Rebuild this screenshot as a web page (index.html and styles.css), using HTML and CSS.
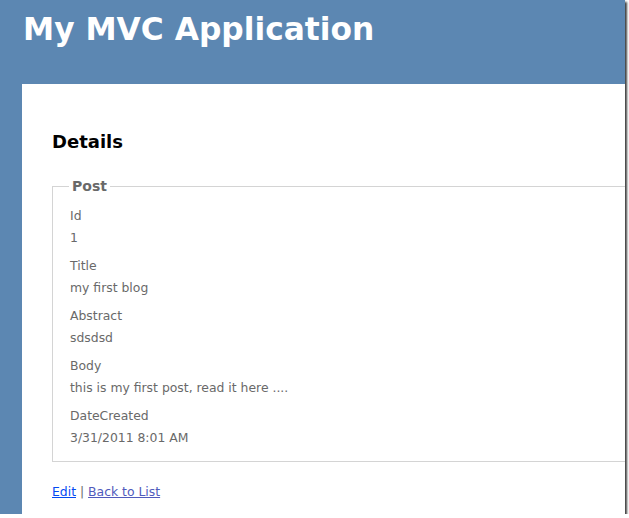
FILE: index.html
```html
<!DOCTYPE html>
<html>

<head>
    <meta http-equiv="Content-Type" content="text/html; charset=utf-8" />
    <title>Details</title>
    <link rel="stylesheet" href="styles.css">
</head>

<body>
    <div class="shot">
        <div class="page">
            <div class="header">
                <h1>My MVC Application</h1>
            </div>
            <div class="main">
                <h2>Details</h2>
                <fieldset>
                    <legend>Post</legend>

                    <div class="display-label">Id</div>
                    <div class="display-field">1</div>

                    <div class="display-label">Title</div>
                    <div class="display-field">my first blog</div>

                    <div class="display-label">Abstract</div>
                    <div class="display-field">sdsdsd</div>

                    <div class="display-label">Body</div>
                    <div class="display-field">this is my first post, read it here ....</div>

                    <div class="display-label">DateCreated</div>
                    <div class="display-field">3/31/2011 8:01 AM</div>
                </fieldset>
                <p class="actions">
                    <a href="#">Edit</a> |
                    <a href="#" class="visited">Back to List</a>
                </p>
            </div>
        </div>
    </div>
</body>

</html>
```

FILE: styles.css
```css
* {
    margin: 0;
    padding: 0;
}

body {
    background: #fff;
    font-family: Verdana, "DejaVu Sans", Tahoma, sans-serif;
    font-size: 12.4px;
    color: #696969;
}

.shot {
    width: 625px;
    height: 514px;
    overflow: hidden;
    background: #5c87b2;
    box-shadow: 2px 2px 2px rgba(0, 0, 0, 0.75);
}

.page {
    display: flex;
    flex-direction: column;
    height: 100%;
}

.header {
    flex-shrink: 0;
    height: 84px;
    padding-left: 23px;
}

.header h1 {
    color: #fff;
    font-family: Verdana, "DejaVu Sans", sans-serif;
    font-weight: bold;
    font-size: 31.3px;
    line-height: 58px;
    white-space: nowrap;
}

.main {
    flex: 1 0 auto;
    margin-left: 22px;
    margin-right: -60px;
    padding: 30px 30px 15px 30px;
    background: #fff;
}

h2 {
    color: #000;
    font-size: 18px;
    font-weight: bold;
    margin: 17px 0 26px;
}

fieldset {
    border: 1px solid #d4d4d4;
    padding: 2px 16px 15px 17px;
}

legend {
    font-size: 14px;
    font-weight: bold;
    line-height: 16px;
    padding: 0 3px;
    margin-left: -1px;
    color: #696969;
}

.display-label,
.display-field {
    line-height: 16px;
}

.display-label {
    margin-top: 12px;
}

.display-field {
    margin-top: 6px;
}

.actions {
    margin-top: 22px;
    line-height: 16px;
}

a {
    color: #034af3;
    text-decoration: underline;
}

a.visited {
    color: #505abc;
}
```
